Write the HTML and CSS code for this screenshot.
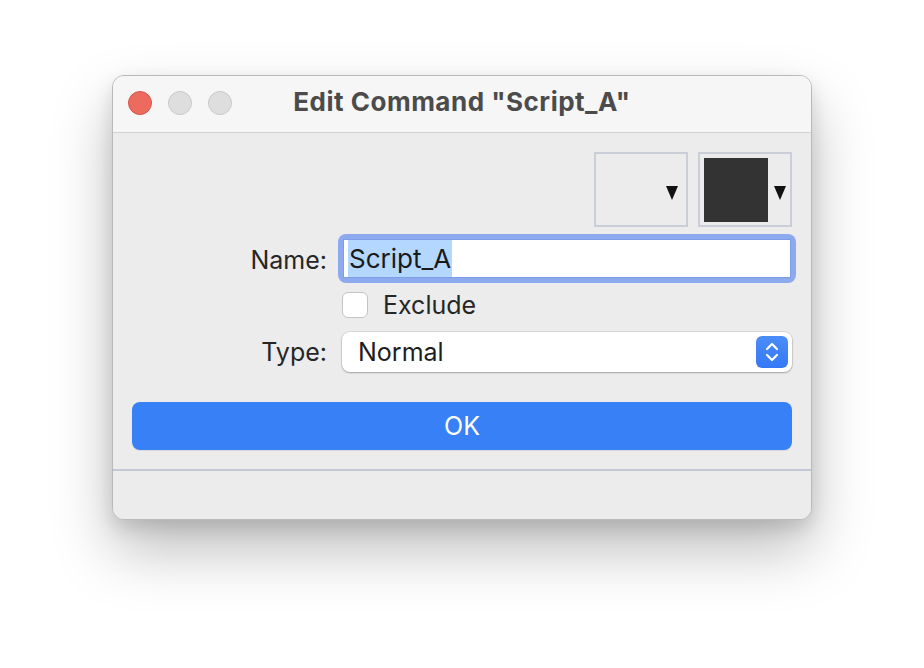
FILE: index.html
```html
<!DOCTYPE html>
<html>
<head>
<meta charset="utf-8">
<link rel="stylesheet" href="styles.css">
</head>
<body>
<div class="window">
  <div class="titlebar">
    <div class="lights">
      <span class="light red"></span>
      <span class="light gray"></span>
      <span class="light gray"></span>
    </div>
    <div class="title">Edit Command "Script_A"</div>
  </div>
  <div class="content">
    <div class="swatches">
      <div class="swatch">
        <svg class="tri" width="12" height="14" viewBox="0 0 12 14"><polygon points="0,0 12,0 6,14" fill="#111"/></svg>
      </div>
      <div class="swatch">
        <div class="fill"></div>
        <svg class="tri" width="12" height="14" viewBox="0 0 12 14"><polygon points="0,0 12,0 6,14" fill="#111"/></svg>
      </div>
    </div>
    <div class="form">
      <label class="lbl name-lbl">Name:</label>
      <div class="field-ring"><div class="field"><span class="sel">Script_A</span></div></div>
      <div></div>
      <div class="check-row"><span class="checkbox"></span><span class="check-text">Exclude</span></div>
      <label class="lbl type-lbl">Type:</label>
      <div class="select">
        <span>Normal</span>
        <span class="stepper">
          <svg width="14" height="22" viewBox="0 0 14 22"><path d="M2 8 L7 3 L12 8 M2 14 L7 19 L12 14" fill="none" stroke="#fff" stroke-width="2.2" stroke-linecap="round" stroke-linejoin="round"/></svg>
        </span>
      </div>
    </div>
    <div class="ok">OK</div>
  </div>
  <div class="footer"></div>
</div>
</body>
</html>
```

FILE: styles.css
```css
html, body {
  margin: 0;
  padding: 0;
  background: #ffffff;
}
body {
  min-height: 668px;
  box-sizing: border-box;
  padding: 75px 0 0 112px;
  font-family: "Inter", "Liberation Sans", sans-serif;
  color: #222;
}
.window {
  width: 700px;
  height: 445px;
  box-sizing: border-box;
  border-radius: 12px;
  background: #ececec;
  border: 1px solid #b9b9b9;
  box-shadow: 0 30px 60px rgba(0,0,0,0.26), 0 8px 18px rgba(0,0,0,0.12);
  overflow: hidden;
  display: flex;
  flex-direction: column;
}
.titlebar {
  height: 56px;
  flex: none;
  background: #f6f6f6;
  border-bottom: 1px solid #d2d2d2;
  display: flex;
  align-items: center;
  position: relative;
}
.lights {
  display: flex;
  gap: 16px;
  padding-left: 15px;
  margin-top: -2px;
}
.light {
  width: 24px;
  height: 24px;
  border-radius: 50%;
  box-sizing: border-box;
}
.light.red { background: #ed6a5e; border: 1px solid #d55448; }
.light.gray { background: #dedede; border: 1px solid #c9c9c9; }
.title {
  position: absolute;
  left: 0; right: 0;
  top: 10px;
  text-align: center;
  font-weight: bold;
  font-size: 26px;
  letter-spacing: 0.5px;
  color: #4b4b4b;
  pointer-events: none;
}
.content {
  padding: 19px 19px 0 19px;
  flex: 1;
}
.swatches {
  display: flex;
  justify-content: flex-end;
  gap: 10px;
}
.swatch {
  width: 94px;
  height: 75px;
  box-sizing: border-box;
  border: 2px solid #c9ced9;
  position: relative;
}
.swatch .fill {
  position: absolute;
  left: 4px; top: 4px;
  width: 64px; height: 64px;
  background: #333333;
}
.swatch .tri {
  position: absolute;
  right: 8px;
  top: 32px;
}
.swatch + .swatch .tri { right: 4px; }
.form {
  display: grid;
  grid-template-columns: 1fr 450px;
  column-gap: 15px;
  align-items: center;
  margin-top: 7px;
}
.lbl {
  text-align: right;
  font-size: 25px;
  color: #262626;
}
.name-lbl { padding-top: 2px; }
.type-lbl { margin-top: 14px; }
.field-ring {
  margin: 0 -4px;
  padding: 5px;
  border-radius: 8px;
  background: #8eaaee;
}
.field {
  height: 39px;
  box-sizing: border-box;
  background: #fff;
  border: 1px solid #7d9de6;
  display: flex;
  align-items: stretch;
  padding-left: 4px;
  font-size: 26px;
  color: #1a1a1a;
}
.sel {
  background: #b3d7ff;
  padding: 0 1px;
  line-height: 37px;
}
.check-row {
  display: flex;
  align-items: center;
  gap: 15px;
  margin-top: 9px;
  height: 26px;
}
.checkbox {
  width: 26px;
  height: 26px;
  box-sizing: border-box;
  border-radius: 6px;
  border: 1px solid #c4c4c4;
  background: #fff;
}
.check-text {
  font-size: 25px;
  color: #262626;
}
.select {
  margin-top: 14px;
  height: 40px;
  box-sizing: border-box;
  background: #fff;
  border-radius: 8px;
  box-shadow: 0 0 0 1px rgba(0,0,0,0.08), 0 1px 2px rgba(0,0,0,0.25);
  display: flex;
  align-items: center;
  justify-content: space-between;
  padding: 0 4px 0 16px;
  font-size: 25px;
  color: #1e1e1e;
}
.stepper {
  width: 32px;
  height: 32px;
  border-radius: 6px;
  background: linear-gradient(#4b8df7, #3478f6);
  display: flex;
  align-items: center;
  justify-content: center;
}
.ok {
  margin-top: 30px;
  height: 48px;
  border-radius: 8px;
  background: #3880f6;
  color: #fff;
  font-size: 25px;
  display: flex;
  align-items: center;
  justify-content: center;
  box-shadow: 0 1px 1px rgba(0,0,0,0.08);
}
.footer {
  height: 48px;
  flex: none;
  border-top: 2px solid #c2c8d6;
  background: #ececec;
}
```
